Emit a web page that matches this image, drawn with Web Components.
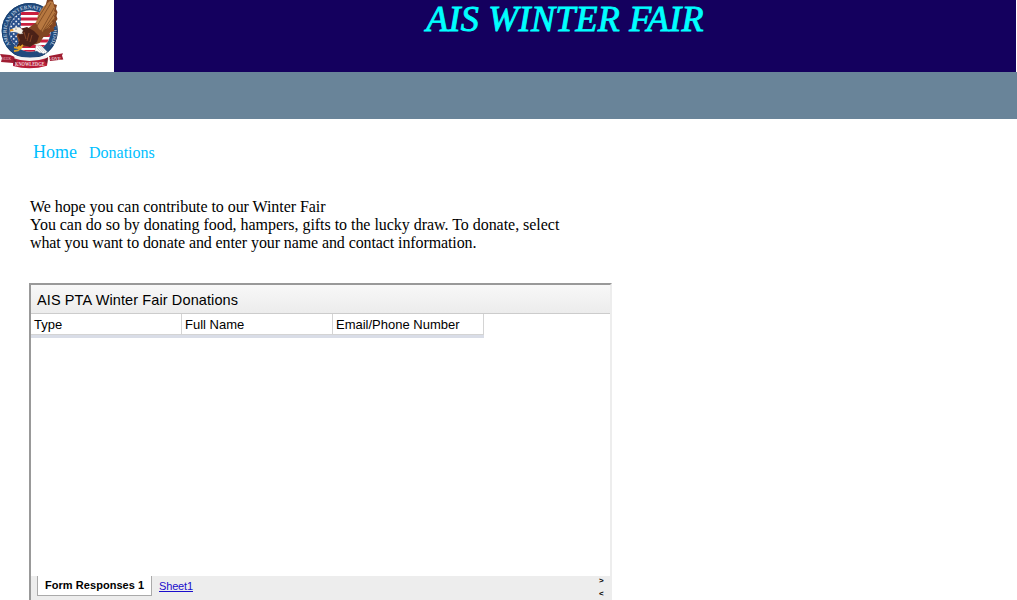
<!DOCTYPE html>
<html lang="en"><head><meta charset="utf-8"><title>AIS Winter Fair</title>
<style>html,body{margin:0;height:600px;overflow:hidden;background:#fff;font-family:"Liberation Serif",serif}</style></head>
<body><fair-page></fair-page>
<script>
const define=(name,html)=>customElements.define(name,class extends HTMLElement{
  constructor(){super();this.attachShadow({mode:'open'}).innerHTML=html;}
});
define('school-crest',`<style>:host{display:block;width:114px;height:72px;background:#fff}svg{display:block}text{font-family:"Liberation Serif",serif}</style>
<svg width="114" height="72" viewBox="0 0 114 72">
<defs><clipPath id="flag"><circle cx="30" cy="31" r="20.7"/></clipPath>
<path id="arc" d="M10.5 45A23.4 23.4 0 1 1 49.5 45"/>
<pattern id="stars" width="5" height="5" patternUnits="userSpaceOnUse"><circle cx="1.2" cy="1.4" r=".95" fill="#e4eaf3"/><circle cx="3.7" cy="3.9" r=".95" fill="#e4eaf3"/></pattern></defs>
<circle cx="29.7" cy="31" r="28" fill="#214a7e"/>
<circle cx="29.7" cy="31" r="27.5" fill="none" stroke="#19406f"/>
<g clip-path="url(#flag)"><path fill="#fff" d="M9 10h43v43H9z"/>
<path stroke="#c91f3f" stroke-width="2.9" d="M20 13.5h32M20 19h32M20 24.4h32M20 30h32M20 35.5h32M9 41h43M9 46.5h43M9 51.5h43"/>
<path fill="#29508c" d="M9 10h12v38H9z"/><path fill="url(#stars)" d="M9 10h12v38H9z"/></g>
<text font-size="5.2" font-weight="bold" fill="#b5c6dc"><textPath href="#arc" textLength="100" lengthAdjust="spacingAndGlyphs">AMERICAN INTERNATIONAL SCHOOL</textPath></text>
<path fill="#814522" d="M47 0h6l1 4 3 1-1 4 1.5 3-1 4 1 3-2 3 1 3-3 3 1 3-4 1-2 4-5 1-4 6-6 2-10 2-4-2-3-10 5-5 7-2 8-6 5-9 3-4z"/>
<path fill="#b77840" d="M50 1l3 1 1 4 1 2-1 3 2 2-2 3 1 3-3 2 1 3-4 2 1 2-5 1-2 3-4-3-3-6 2-8 5-8z"/>
<path stroke="#79451f" stroke-width=".8" fill="none" d="M51 3L37 26M54 8L41 31M55 13L43 31M55 18L43 32M53 23l-9 9M47 4l-10 16"/>
<path fill="#4b2117" d="M20 29l7-2 7 4 5 5-2 6-7 5-7-2-3 3h-4l4-8-2-4z"/>
<path stroke="#934c29" stroke-width=".8" d="M24 32l2 7M29 33l-2 8M32 35l-2 7" fill="none"/>
<path fill="#f6f3ea" stroke="#b9b8b3" stroke-width=".3" d="M12 29l4-2 4 .5 3 3-1 2 1 1-3 .5-4-2h-4z"/>
<path fill="#e79b2c" d="M13 29l-3 .5v2.2l1.5-.8 2 .2z"/><circle cx="16" cy="29" r=".5" fill="#222"/>
<path stroke="#e5a529" stroke-width="1.7" fill="none" d="M23 45l-4 3.4-5-1M22 47l-4 3.4-4 .8M20 46l-3 2"/>
<path fill="#fff" stroke="#999" stroke-width=".35" d="M36 45l5 .5 7 7-2-.4.5 1.6-2.5-.8-.4 1-2.6-1.4-1 .6-3-2-2 .2z"/>
<path stroke="#9a9a9a" stroke-width=".4" d="M38 46l5 6M40 46l5 6M37 48l4 4"/>
<path fill="#9f1d32" d="M0 54l10 1 5 2-2 6-12-1 1-4zM49 56l14-2.7-1 2.2 1.3 4L50 61z"/>
<path fill="#f4f4f4" d="M14 55q15 5 34 0l-2 5q-16 3-31 0z"/>
<path fill="#b61d38" d="M13 58q16 6 35-.3l-1 8q-17 5-34 .3z"/>
<path fill="#791b2b" d="M13 58l4 3-3 4zM48 57l-4 3 3 4z"/>
<text x="2" y="60.2" font-size="5" fill="#e5b7c0" textLength="9" lengthAdjust="spacingAndGlyphs">SEEK</text>
<text x="15" y="65.8" font-size="5.2" font-weight="bold" fill="#f0d6db" textLength="29.5" lengthAdjust="spacingAndGlyphs">KNOWLEDGE</text>
<text x="48.5" y="60" font-size="5" font-weight="bold" fill="#efcbd2" textLength="12.5" lengthAdjust="spacingAndGlyphs">LOVE</text>
</svg>`);
define('site-banner',`<style>:host{display:grid;grid-template-columns:114px 902px 1px;height:72px}
h1{margin:0;background:#14005e;color:#0ff;font:italic 400 36px/39px "Liberation Serif",serif;text-align:center;height:72px;letter-spacing:.28px;-webkit-text-stroke:.9px #0ff}</style><school-crest></school-crest><h1><slot></slot></h1>`);
define('site-nav',`<style>:host{display:flex;gap:12px;align-items:baseline;padding:23px 0 0 33px;height:56px;box-sizing:border-box;color:#00bfff}
a{font-size:16px;line-height:21px}.home{font-size:18px}</style><a class="home">Home</a><a>Donations</a>`);
define('fair-intro',`<style>:host{display:block;padding:23px 0 0 30px;height:108px;box-sizing:border-box;font-size:16px;line-height:18px;color:#000}p{margin:0;white-space:nowrap}.a{letter-spacing:-.06px}.b{letter-spacing:-.036px}.c{letter-spacing:-.1px}</style><p class="a">We hope you can contribute to our Winter Fair</p><p class="b">You can do so by donating food, hampers, gifts to the lucky draw. To donate, select</p><p class="c">what you want to donate and enter your name and contact information.</p>`);
define('sheet-tabs',`<style>:host{display:flex;height:25px;background:#ededed;padding-left:6px;box-sizing:border-box;font-size:11px}
b{width:115px;height:20px;box-sizing:border-box;border:1px solid #aaa;border-top:0;background:#fff;padding-left:7px;line-height:18px;letter-spacing:.05px;white-space:nowrap}
a{margin-left:7px;line-height:20px;letter-spacing:-.15px;color:#1a0dcc;text-decoration:underline}.arrows{margin-left:auto;width:11px;font-size:8px;font-weight:bold}span{display:block;height:13px;line-height:9px}</style>
<b>Form Responses 1</b><a>Sheet1</a><div class="arrows"><span>&gt;</span><span>&lt;</span></div>`);
define('donation-sheet',`<style>:host{display:flex;flex-direction:column;box-sizing:border-box;margin-left:29px;width:583px;height:320px;border:2px solid;border-color:#999 #ededed #ededed #999;font-family:"Liberation Sans",sans-serif;color:#000}
header{height:29px;box-sizing:border-box;border-bottom:1px solid #ccc;background:linear-gradient(#f8f8f8,#ececec);font-size:14.5px;letter-spacing:.11px;line-height:30px;padding-left:6px;white-space:nowrap}
.row{display:grid;grid-template-columns:151px 151px 151px;width:453px;border-bottom:3px solid #d9dde7}
.row div{height:21px;box-sizing:border-box;border-right:1px solid #d4d4d4;border-bottom:1px solid #d4d4d4;padding-left:3px;font-size:13px;line-height:22px;white-space:nowrap}
main{flex:1}</style><header>AIS PTA Winter Fair Donations</header><div class="row"><div>Type</div><div>Full Name</div><div>Email/Phone Number</div></div><main></main><sheet-tabs></sheet-tabs>`);
define('fair-page',`<style>:host{display:block;width:1017px;height:600px;overflow:hidden}.strip{height:47px;background:#698499}</style><site-banner>AIS WINTER FAIR</site-banner><div class="strip"></div><site-nav></site-nav><fair-intro></fair-intro><donation-sheet></donation-sheet>`);
</script></body></html>
